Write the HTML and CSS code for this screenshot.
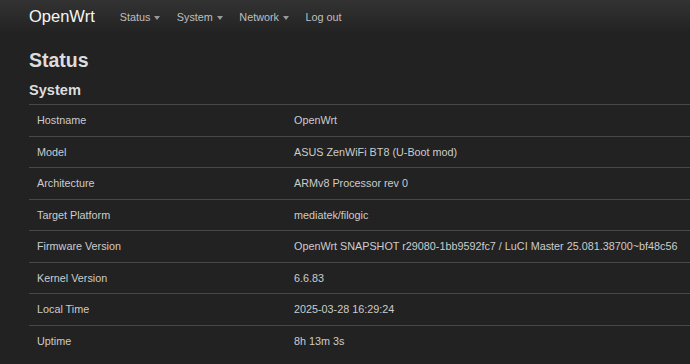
FILE: index.html
```html
<!DOCTYPE html>
<html lang="en">
<head>
    <meta charset="UTF-8">
    <meta name="viewport" content="width=device-width, initial-scale=1.0">
    <title>OpenWrt - Status</title>
    <link rel="stylesheet" href="styles.css">
</head>
<body>
    <header class="topbar">
        <a class="brand" href="#">OpenWrt</a>
        <ul class="nav">
            <li><a href="#" class="dropdown">Status</a></li>
            <li><a href="#" class="dropdown">System</a></li>
            <li><a href="#" class="dropdown">Network</a></li>
            <li><a href="#">Log out</a></li>
        </ul>
    </header>

    <div class="main">
        <h2>Status</h2>
        <h3>System</h3>
        <table class="status-table">
            <tr><td>Hostname</td><td>OpenWrt</td></tr>
            <tr><td>Model</td><td>ASUS ZenWiFi BT8 (U-Boot mod)</td></tr>
            <tr><td>Architecture</td><td>ARMv8 Processor rev 0</td></tr>
            <tr><td>Target Platform</td><td>mediatek/filogic</td></tr>
            <tr><td>Firmware Version</td><td>OpenWrt SNAPSHOT r29080-1bb9592fc7 / LuCI Master 25.081.38700~bf48c56</td></tr>
            <tr><td>Kernel Version</td><td>6.6.83</td></tr>
            <tr><td>Local Time</td><td>2025-03-28 16:29:24</td></tr>
            <tr><td>Uptime</td><td>8h 13m 3s</td></tr>
        </table>
    </div>
</body>
</html>
```

FILE: styles.css
```css
body {
    margin: 0;
    background: #222;
    color: #ccc;
    font-family: "Liberation Sans", Arial, Helvetica, sans-serif;
    font-size: 10.8px;
    overflow: hidden;
}
a {
    text-decoration: none;
}
.topbar {
    display: flex;
    align-items: center;
    height: 33px;
    padding-left: 29px;
    background: linear-gradient(to bottom, #333, #222);
}
.brand {
    color: #f5f5f5;
    font-size: 16.5px;
    margin-right: 25px;
}
.nav {
    display: flex;
    gap: 16.5px;
    list-style: none;
    margin: 0;
    padding: 0;
}
.nav a {
    color: #bfbfbf;
    font-size: 10.8px;
}
.nav a.dropdown::after {
    content: "";
    display: inline-block;
    margin-left: 4px;
    vertical-align: middle;
    border-top: 4px solid #999;
    border-left: 3.5px solid transparent;
    border-right: 3.5px solid transparent;
}
.main {
    padding-left: 29px;
}
h2 {
    margin: 15px 0 0;
    font-size: 19.5px;
    line-height: 24px;
    color: #ddd;
}
h3 {
    margin: 9px 0 0;
    font-size: 14.6px;
    line-height: 18px;
    color: #ddd;
}
.status-table {
    margin-top: 5px;
    width: 100%;
    table-layout: fixed;
    border-collapse: collapse;
}
.status-table td {
    padding: 6.25px 8px;
    line-height: 18px;
    border-top: 1px solid #484848;
    color: #ccc;
    white-space: nowrap;
}
.status-table td:first-child {
    width: 241px;
}
```
